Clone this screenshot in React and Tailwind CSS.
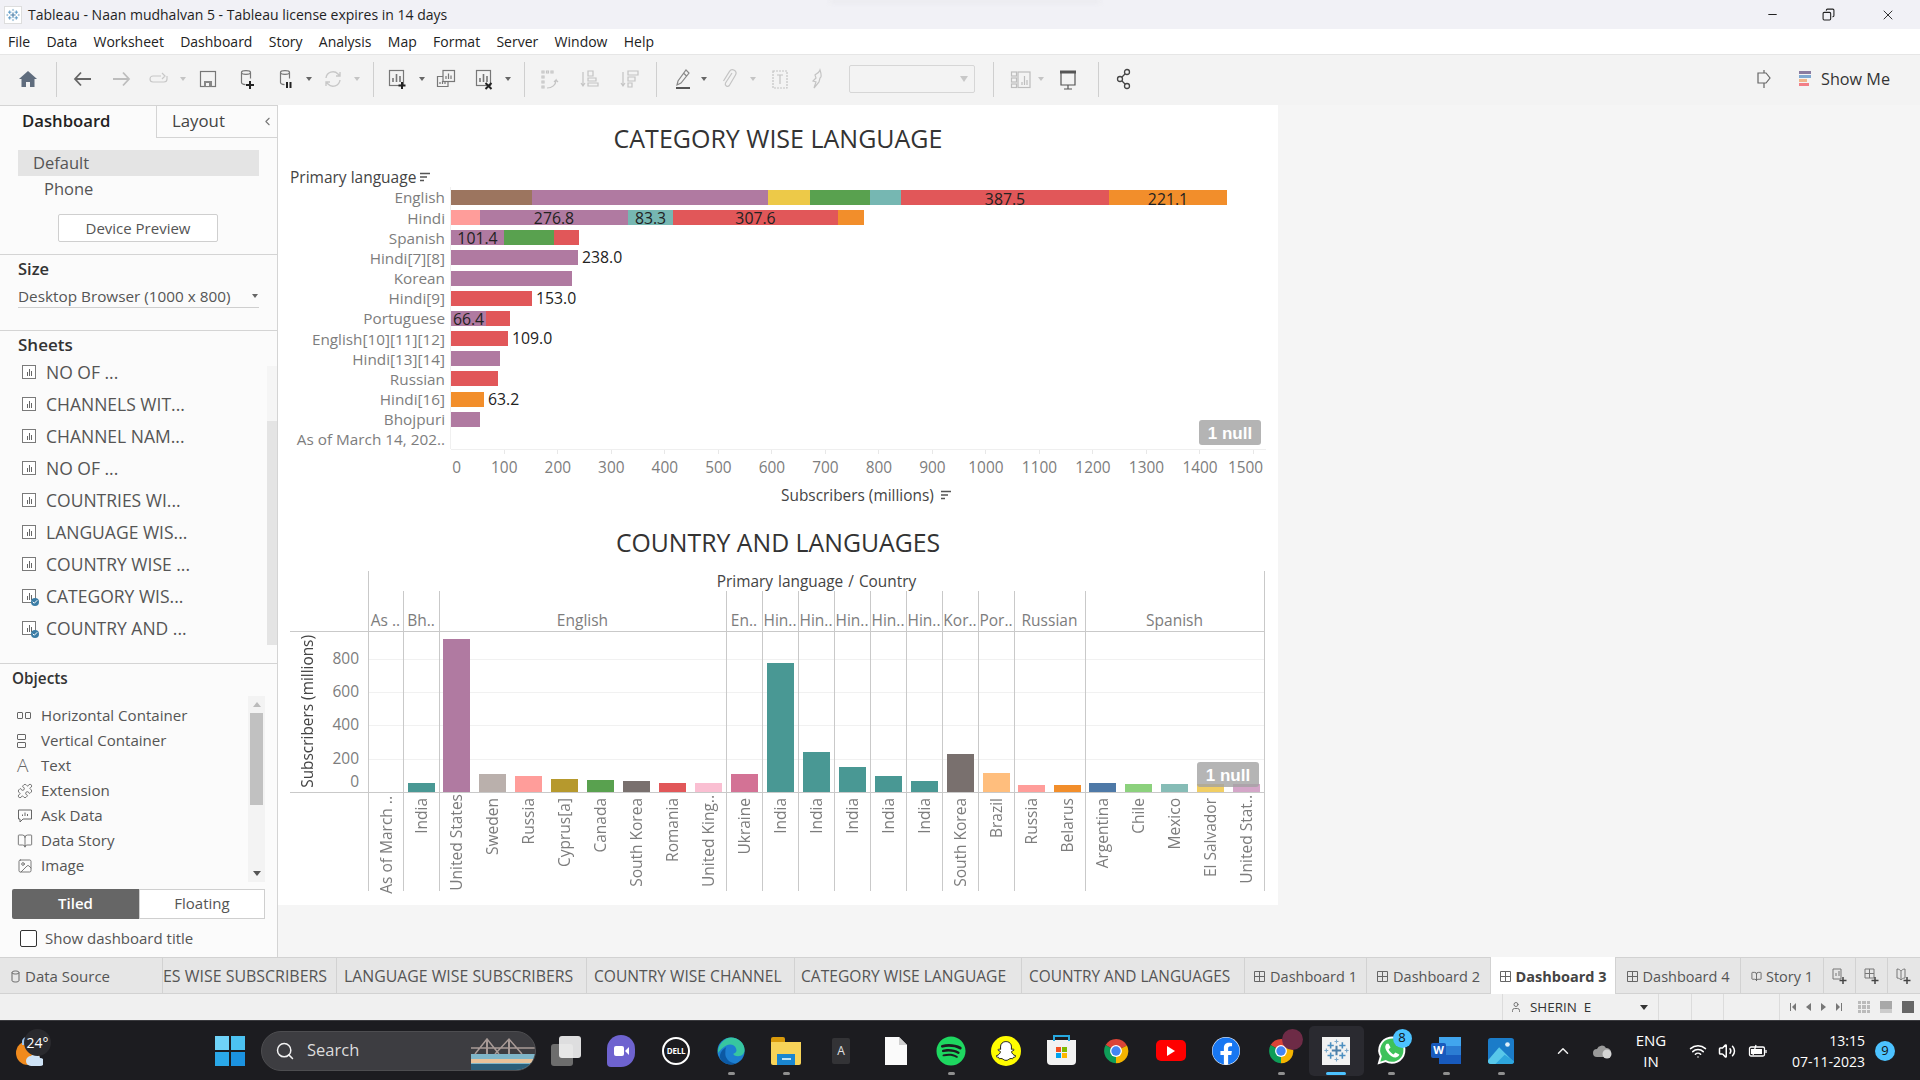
import { Minus, X, Copy, ChevronUp, ChevronLeft, Wifi, Volume2, Puzzle, Search, BookOpen, Image as ImageIcon, User, Check } from 'lucide-react';
import { FaFacebook, FaSpotify, FaSnapchatGhost } from 'react-icons/fa';

const menus = ['File', 'Data', 'Worksheet', 'Dashboard', 'Story', 'Analysis', 'Map', 'Format', 'Server', 'Window', 'Help'];

const sheets = [
  ['NO OF ...'], ['CHANNELS WIT...'], ['CHANNEL NAM...'], ['NO OF ...'], ['COUNTRIES WI...'],
  ['LANGUAGE WIS...'], ['COUNTRY WISE ...'], ['CATEGORY WIS...', true], ['COUNTRY AND ...', true],
];

const purple = 'bg-[#b07aa1]';
const red = 'bg-[#e15759]';
const orange = 'bg-[#f28e2b]';
const green = 'bg-[#59a14f]';

// x widths in pixels, measured from the bar start
const langRows = [
  { name: 'English', drop: true, segs: [[81, 'bg-[#9c755f]'], [236, purple], [42, 'bg-[#edc948]'], [60, green], [31, 'bg-[#76b7b2]'], [208, red, '387.5'], [118, orange, '221.1']] },
  { name: 'Hindi', segs: [[29, 'bg-[#ff9d9a]'], [148, purple, '276.8'], [45, 'bg-[#76b7b2]', '83.3'], [165, red, '307.6'], [26, orange]] },
  { name: 'Spanish', segs: [[53, purple, '101.4'], [50, green], [25, red]] },
  { name: 'Hindi[7][8]', segs: [[127, purple]], after: '238.0' },
  { name: 'Korean', segs: [[121, purple]] },
  { name: 'Hindi[9]', segs: [[81, red]], after: '153.0' },
  { name: 'Portuguese', segs: [[35, purple, '66.4'], [24, red]] },
  { name: 'English[10][11][12]', segs: [[57, red]], after: '109.0' },
  { name: 'Hindi[13][14]', segs: [[49, purple]] },
  { name: 'Russian', segs: [[47, red]] },
  { name: 'Hindi[16]', segs: [[33, orange]], after: '63.2' },
  { name: 'Bhojpuri', segs: [[29, purple]] },
  { name: 'As of March 14, 202..', segs: [] },
];

const axisTicks = ['0', '100', '200', '300', '400', '500', '600', '700', '800', '900', '1000', '1100', '1200', '1300', '1400', '1500'];

const teal = 'bg-[#499894]';
const countryGroups = [
  { name: 'As ..', w: 35, items: [{ c: 'As of March ..', h: 0, pt: 'pt-[3px]' }] },
  { name: 'Bh..', w: 36, items: [{ c: 'India', h: 9, col: teal }] },
  {
    name: 'English', w: 287, nudge: '-ml-px', items: [
      { c: 'United States', h: 153, col: purple, pt: 'pt-[1px]' },
      { c: 'Sweden', h: 18, col: 'bg-[#bab0ac]' },
      { c: 'Russia', h: 16, col: 'bg-[#ff9d9a]' },
      { c: 'Cyprus[a]', h: 13, col: 'bg-[#b6992d]' },
      { c: 'Canada', h: 12, col: green },
      { c: 'South Korea', h: 11, col: 'bg-[#79706e]' },
      { c: 'Romania', h: 9, col: red },
      { c: 'United King..', h: 9, col: 'bg-[#fabfd2]', pt: 'pt-[2px]' },
    ],
  },
  { name: 'En..', w: 36, items: [{ c: 'Ukraine', h: 18, col: 'bg-[#d37295]' }] },
  { name: 'Hin..', w: 36, items: [{ c: 'India', h: 129, col: teal }] },
  { name: 'Hin..', w: 36, items: [{ c: 'India', h: 40, col: teal }] },
  { name: 'Hin..', w: 36, items: [{ c: 'India', h: 25, col: teal }] },
  { name: 'Hin..', w: 36, items: [{ c: 'India', h: 16, col: teal }] },
  { name: 'Hin..', w: 36, items: [{ c: 'India', h: 11, col: teal }] },
  { name: 'Kor..', w: 36, items: [{ c: 'South Korea', h: 38, col: 'bg-[#79706e]' }] },
  { name: 'Por..', w: 36, items: [{ c: 'Brazil', h: 19, col: 'bg-[#ffbe7d]' }] },
  {
    name: 'Russian', w: 71, nudge: '-ml-px', items: [
      { c: 'Russia', h: 7, col: 'bg-[#ff9d9a]' },
      { c: 'Belarus', h: 7, col: orange },
    ],
  },
  {
    name: 'Spanish', w: 179, nudge: '-ml-px', items: [
      { c: 'Argentina', h: 9, col: 'bg-[#4e79a7]' },
      { c: 'Chile', h: 8, col: 'bg-[#8cd17d]' },
      { c: 'Mexico', h: 8, col: 'bg-[#86bcb6]' },
      { c: 'El Salvador', h: 8, col: 'bg-[#f1ce63]' },
      { c: 'United Stat..', h: 8, col: 'bg-[#d4a6c8]', pt: 'pt-[2px]' },
    ],
  },
];

const gridLines = ['top-[27px]', 'top-[60px]', 'top-[93px]', 'top-[127px]'];
const yLabels = [['800', 'top-[16px]'], ['600', 'top-[49px]'], ['400', 'top-[82px]'], ['200', 'top-[116px]'], ['0', 'top-[139px]']];

const tabs = [
  { t: 'ES WISE SUBSCRIBERS', w: 174, cls: 'justify-start text-[15.950px]' },
  { t: 'LANGUAGE WISE SUBSCRIBERS', w: 250, cls: 'justify-start pl-[7px] text-[15.850px]' },
  { t: 'COUNTRY WISE CHANNEL', w: 208, cls: 'justify-start pl-[7px] text-[15.600px]' },
  { t: 'CATEGORY WISE LANGUAGE', w: 227, cls: 'justify-start pl-[6px] text-[15.600px]' },
  { t: 'COUNTRY AND LANGUAGES', w: 223, cls: 'justify-start pl-[7px] text-[15.400px]' },
  { t: 'Dashboard 1', w: 122, dash: true, cls: 'justify-center' },
  { t: 'Dashboard 2', w: 124, dash: true, cls: 'justify-center' },
  { t: 'Dashboard 3', w: 125, dash: true, cls: 'justify-center bg-white font-bold text-[#444] -my-px border-y-white' },
  { t: 'Dashboard 4', w: 125, dash: true, cls: 'justify-center' },
];

function TableauLogo({ size = 16 }) {
  const cross = (x, y, r, col, sw) => (
    <g stroke={col} strokeWidth={sw}>
      <path d={`M${x - r} ${y}H${x + r}M${x} ${y - r}V${y + r}`} />
    </g>
  );
  return (
    <svg viewBox="0 0 32 32" width={size} height={size}>
      {cross(16, 16, 6, '#4c7fa8', 2.6)}
      {cross(8.5, 9.5, 4, '#4c8fc0', 2)}
      {cross(23.5, 9.5, 4, '#4c8fc0', 2)}
      {cross(8.5, 22.5, 4, '#4c8fc0', 2)}
      {cross(23.5, 22.5, 4, '#4c8fc0', 2)}
      {cross(16, 4.5, 2.5, '#7aa7c9', 1.4)}
      {cross(16, 27.5, 2.5, '#7aa7c9', 1.4)}
      {cross(3, 16, 2.5, '#7aa7c9', 1.4)}
      {cross(29, 16, 2.5, '#7aa7c9', 1.4)}
    </svg>
  );
}

function Tool({ ml, children }) {
  return <div className={`w-6 h-6 flex-none flex items-center justify-center ${ml}`}>{children}</div>;
}

function Caret({ ml, light }) {
  return (
    <div className={`w-2 flex-none flex justify-center ${ml}`}>
      <div className={`w-0 h-0 border-x-[3px] border-x-transparent border-t-[4px] ${light ? 'border-t-[#c4c4c4]' : 'border-t-[#666]'}`} />
    </div>
  );
}

function Sep({ ml }) {
  return <div className={`w-px h-[35px] flex-none bg-[#cfcfcf] ${ml}`} />;
}

function Ico({ children, color = '#777', sw = 1.2 }) {
  return (
    <svg viewBox="0 0 24 24" width="24" height="24" fill="none" stroke={color} strokeWidth={sw}>
      {children}
    </svg>
  );
}

function ChartGlyph({ color = '#777' }) {
  return (
    <>
      <rect x="4.5" y="3.5" width="14" height="15" stroke={color} />
      <path d="M8 15v-4M11.5 15V7M15 15v-6" stroke={color} strokeWidth="1.6" />
    </>
  );
}

function Cylinder() {
  return <path d="M6.5 5.5c0-2.4 9-2.4 9 0v6M6.5 5.5c0 2.4 9 2.4 9 0M6.5 5.5v10c0 1.4 2 2 4 2.2" />;
}

function SheetIcon({ check }) {
  return (
    <div className="relative w-[14px] h-[14px] flex-none border border-[#7a7a7a] bg-white flex items-end justify-center gap-px pb-[2px]">
      <div className="w-px h-[4px] bg-[#666]" />
      <div className="w-px h-[7px] bg-[#666]" />
      <div className="w-px h-[5px] bg-[#666]" />
      {check && (
        <div className="absolute -right-[4px] -bottom-[4px] w-[8px] h-[8px] rounded-full bg-[#3a7ca5] flex items-center justify-center">
          <Check size={6} color="white" strokeWidth={4} />
        </div>
      )}
    </div>
  );
}

function SortIcon() {
  return (
    <svg width="11" height="11" viewBox="0 0 11 11" className="flex-none">
      <path d="M0 1.5h10M0 5h7M0 8.5h4" stroke="#555" strokeWidth="1.6" />
    </svg>
  );
}

function TitleBar() {
  return (
    <div className="relative h-[29px] flex-none bg-[#f1f1f6] flex items-center">
      <div className="absolute top-0 left-[830px] w-[270px] h-[3px] bg-[#e9e9ed] blur-[2px]" />
      <div className="w-[24px] flex justify-center ml-[1px] mr-[3px]">
        <div className="bg-white border border-[#ddd] p-px"><TableauLogo size={14} /></div>
      </div>
      <span className="text-[14px] text-[#1f1f1f]">Tableau - Naan mudhalvan 5 - Tableau license expires in 14 days</span>
      <div className="ml-auto flex items-center pr-1">
        <div className="w-14 flex justify-center"><Minus size={13} color="#222" /></div>
        <div className="w-14 flex justify-center"><Copy size={13} color="#222" className="-scale-x-100" /></div>
        <div className="w-14 ml-1 flex justify-center"><X size={16} color="#222" strokeWidth={1.4} /></div>
      </div>
    </div>
  );
}

function MenuBar() {
  return (
    <div className="h-[25px] flex-none bg-white flex items-center gap-[16.300px] pl-[8px] text-[14px] text-[#222]">
      {menus.map(m => <span key={m}>{m}</span>)}
    </div>
  );
}

function Toolbar() {
  return (
    <div className="h-[51px] flex-none bg-[#f3f3f3] border-t border-[#e6e6e6] pb-[2px] flex items-center">
      <Tool ml="ml-[16px]">
        <svg viewBox="0 0 18 16" width="18" height="16"><path d="M9 0 18 8h-2.500v8H11v-5H7v5H2.500V8H0z" fill="#5f6c7d" /></svg>
      </Tool>
      <Sep ml="ml-[16px]" />
      <Tool ml="ml-[14px]"><Ico color="#666" sw={1.8}><path d="M20 12H4M10 5.500 4 12l6 6.500" /></Ico></Tool>
      <Tool ml="ml-[14px]"><Ico color="#bdbdbd" sw={1.8}><path d="M4 12h16M14 5.500l6 6.500-6 6.500" /></Ico></Tool>
      <Tool ml="ml-[14px]"><Ico color="#c8c8c8"><path d="M14 9H6a3 3 0 0 0 0 6h11a3 3 0 0 0 3-3V9M15 6l3 3-3 3" /></Ico></Tool>
      <Caret ml="ml-[8px]" light />
      <Tool ml="ml-[9px]"><Ico><rect x="4.500" y="4.500" width="15" height="15" /><rect x="8" y="14" width="8" height="5.500" fill="#888" stroke="none" /><rect x="10" y="16" width="3" height="3" fill="#f3f3f3" stroke="none" /></Ico></Tool>
      <Tool ml="ml-[15px]"><Ico><Cylinder /><path d="M15 14v8M11 18h8" stroke="#222" strokeWidth="2" /></Ico></Tool>
      <Tool ml="ml-[15px]"><Ico><Cylinder /><path d="M13 15v6M16.500 15v6" stroke="#222" strokeWidth="2" /></Ico></Tool>
      <Caret ml="ml-[7px]" />
      <Tool ml="ml-[8px]"><Ico color="#c8c8c8" sw={1.4}><path d="M5 11a7 7 0 0 1 12-4l2 2M19 13a7 7 0 0 1-12 4l-2-2M19 5v4h-4M5 19v-4h4" /></Ico></Tool>
      <Caret ml="ml-[8px]" light />
      <Sep ml="ml-[12px]" />
      <Tool ml="ml-[11px]"><Ico><ChartGlyph /><path d="M17 15v7M13.500 18.500h7" stroke="#222" strokeWidth="2" /></Ico></Tool>
      <Caret ml="ml-[9px]" />
      <Tool ml="ml-[8px]"><Ico><rect x="9" y="3.500" width="11.500" height="11" /><path d="M12 12V9M14.500 12V6.500M17 12V8.500" /><path d="M9 9.500H3.500v10H14v-5" /><path d="M6 17v-2M8.500 17v-3M11 17v-2" /></Ico></Tool>
      <Tool ml="ml-[14px]"><Ico><ChartGlyph /><path d="m13.500 16 6 6M19.500 16l-6 6" stroke="#222" strokeWidth="2" /></Ico></Tool>
      <Caret ml="ml-[8px]" />
      <Sep ml="ml-[12px]" />
      <Tool ml="ml-[12px]"><Ico color="#c4c4c4"><path d="M5 4h2v2H5zM9.500 4h2v2h-2zM14 4h2v2h-2zM5 9h2v2H5zM5 14h2v2H5zM5 19h2v2H5zM10 21c5 0 9-3 9-8l-2 2M19 13l2 2" /></Ico></Tool>
      <Tool ml="ml-[16px]"><Ico color="#c4c4c4"><path d="M6 5v14M4 16l2 3 2-3M11 4h5v5h-5zM11 11h8v3h-8zM11 16h10v3H11z" /></Ico></Tool>
      <Tool ml="ml-[16px]"><Ico color="#c4c4c4"><path d="M6 5v14M4 16l2 3 2-3M11 4h10v4H11zM11 10h7v4h-7zM11 16h4v4h-4z" /></Ico></Tool>
      <Sep ml="ml-[15px]" />
      <Tool ml="ml-[14px]"><Ico color="#888"><path d="m15 3 3 3-8 10-4 2 1-4zM12.500 6l3 3" /><path d="M5 21h14" stroke="#555" strokeWidth="2" /></Ico></Tool>
      <Caret ml="ml-[5px]" />
      <Tool ml="ml-[9px]"><Ico color="#c4c4c4"><path d="M15 6 8.500 16a2.300 2.300 0 0 0 3.800 2.500L18.500 8a3.500 3.500 0 0 0-6-3.600L6.500 14" /></Ico></Tool>
      <Caret ml="ml-[8px]" light />
      <Tool ml="ml-[11px]"><Ico color="#c4c4c4"><rect x="5" y="4" width="14" height="17" strokeDasharray="2 1" /><path d="M9 8h6M12 8v9" /></Ico></Tool>
      <Tool ml="ml-[13px]"><Ico color="#c4c4c4"><path d="M15 3c-1 3-4 4-5 5l1 3-3 3 3 1-2 6 5-6 1-4c2-1 1-5 0-8z" /></Ico></Tool>
      <div className="ml-[20px] w-[126px] h-[28px] flex-none border border-[#d6d6d6] rounded-[2px] flex items-center justify-end pr-[6px]">
        <div className="w-0 h-0 border-x-[4px] border-x-transparent border-t-[6px] border-t-[#c8c8c8]" />
      </div>
      <Sep ml="ml-[18px]" />
      <Tool ml="ml-[15px]"><Ico color="#bdbdbd"><rect x="2.500" y="5" width="5" height="4" /><rect x="2.500" y="11" width="5" height="4" /><rect x="2.500" y="17" width="5" height="3.500" /><rect x="9" y="5" width="12" height="15.500" /><path d="M13 18v-3M15.500 18V9M18 18v-5" /></Ico></Tool>
      <Caret ml="ml-[4px]" light />
      <Tool ml="ml-[11px]"><Ico color="#555"><path d="M5 5h14v13H5zM12 18v4M8 22h8" /><path d="M4 5h16" strokeWidth="3" /></Ico></Tool>
      <Sep ml="ml-[18px]" />
      <Tool ml="ml-[13px]"><Ico color="#444" sw={1.3}><circle cx="15" cy="5" r="2.500" /><circle cx="8" cy="12" r="2.500" /><circle cx="15" cy="19" r="2.500" /><path d="m13 7-3 3M10 14l3 3" /></Ico></Tool>
      <div className="ml-auto flex items-center pr-[30px]">
        <Tool ml="ml-0"><Ico color="#666"><path d="M12 3v3M12 16v5M6 6h8l4 5-4 5H6z" /></Ico></Tool>
        <div className="ml-[23px] w-[12px] flex flex-col gap-px">
          <div className="h-[3px] bg-[#8a7ba0]" />
          <div className="h-[3px] bg-[#7fa8d0]" />
          <div className="h-[3px] w-[8px] bg-[#f0b58a]" />
          <div className="h-[3px] w-[10px] bg-[#f27e86]" />
        </div>
        <span className="ml-[10px] text-[16.200px] text-[#333]">Show Me</span>
      </div>
    </div>
  );
}

function SectionTitle({ children, className = '' }) {
  return <div className={`font-semibold text-[#333] leading-5 ${className}`}>{children}</div>;
}

const objects = [
  ['Horizontal Container', <div key="h" className="flex gap-[2px]"><div className="w-[6px] h-[7px] border border-[#666] rounded-[1px]" /><div className="w-[6px] h-[7px] border border-[#666] rounded-[1px]" /></div>],
  ['Vertical Container', <div key="v" className="flex flex-col gap-[2px]"><div className="w-[9px] h-[6px] border border-[#666] rounded-[1px]" /><div className="w-[9px] h-[6px] border border-[#666] rounded-[1px]" /></div>],
  ['Text', <span key="t" className="text-[19px] leading-none text-[#666] font-light">A</span>],
  ['Extension', <Puzzle key="e" size={16} color="#666" strokeWidth={1.3} />],
  ['Ask Data', <svg key="a" width="16" height="16" viewBox="0 0 16 16" fill="none" stroke="#666"><path d="M1.500 2h13v9H6l-3 3v-3H1.500z" /><path d="M5.500 8V6.500M8 8V4.500M10.500 8V6" /></svg>],
  ['Data Story', <BookOpen key="d" size={16} color="#666" strokeWidth={1.3} />],
  ['Image', <ImageIcon key="i" size={16} color="#666" strokeWidth={1.3} />],
];

function Sidebar() {
  return (
    <div className="w-[278px] flex-none bg-[#fbfbfb] border-r border-[#d4d4d4] border-t flex flex-col">
      <div className="h-[32px] flex-none flex">
        <div className="w-[156px] pl-[22px] pt-[2px] text-[16.700px] font-semibold text-[#222]">Dashboard</div>
        <div className="flex-1 border-l border-b border-[#d4d4d4] flex items-center pl-[15px] pr-[3px] pb-[1px] text-[16.800px] text-[#444]">
          Layout
          <ChevronLeft size={13} color="#777" className="ml-auto" />
        </div>
      </div>
      <div className="h-[117px] flex-none border-b border-[#d4d4d4] pt-[12px]">
        <div className="mx-[18px] h-[26px] bg-[#e4e4e4] pl-[15px] flex items-center text-[16.500px] text-[#555]">Default</div>
        <div className="h-[26px] pl-[44px] flex items-center text-[16.500px] text-[#555]">Phone</div>
        <div className="mt-[12px] ml-[58px] w-[160px] h-[28px] bg-white border border-[#cfcfcf] rounded-[2px] flex items-center justify-center text-[15px] text-[#555]">Device Preview</div>
      </div>
      <div className="h-[76px] flex-none border-b border-[#d4d4d4] px-[18px] pt-[4px]">
        <SectionTitle className="text-[16.500px]">Size</SectionTitle>
        <div className="mt-[6px] h-[23px] border-b border-[#cfcfcf] flex items-center justify-between text-[15.300px] text-[#555] whitespace-nowrap">
          Desktop Browser (1000 x 800)
          <div className="w-0 h-0 border-x-[3px] border-x-transparent border-t-[4px] border-t-[#666] mr-[1px]" />
        </div>
      </div>
      <div className="h-[333px] flex-none border-b border-[#d4d4d4] flex flex-col">
        <SectionTitle className="pl-[18px] pt-[4px] mb-[1px] text-[17px]">Sheets</SectionTitle>
        <div className="flex">
          <div className="flex-1">
            {sheets.map(([name, check], i) => (
              <div key={i} className="h-[32px] pl-[22px] flex items-center gap-[10px] text-[17.500px] text-[#555] whitespace-nowrap">
                <SheetIcon check={check} />
                {name}
              </div>
            ))}
          </div>
          <div className="w-[10px] mt-[10px] h-[279px] bg-[#f5f5f5] flex flex-col">
            <div className="h-[55px]" />
            <div className="flex-1 bg-[#e4e4e4]" />
          </div>
        </div>
      </div>
      <div className="flex-1 flex flex-col">
        <SectionTitle className="pl-[12px] pt-[4px] text-[15.300px] font-medium">Objects</SectionTitle>
        <div className="mt-[8px] h-[186px] flex">
          <div className="w-[248px] pt-[7px]">
            {objects.map(([name, icon]) => (
              <div key={name} className="h-[25px] flex items-center text-[15.100px] text-[#555] whitespace-nowrap">
                <div className="w-[41px] pl-[17px] flex-none flex justify-start">{icon}</div>
                {name}
              </div>
            ))}
          </div>
          <div className="w-[17px] bg-[#f3f3f3] flex flex-col items-center">
            <div className="h-[17px] flex items-center"><div className="w-0 h-0 border-x-[4px] border-x-transparent border-b-[5px] border-b-[#bbb]" /></div>
            <div className="w-[13px] h-[92px] bg-[#c1c1c1]" />
            <div className="mt-auto h-[17px] flex items-center"><div className="w-0 h-0 border-x-[4px] border-x-transparent border-t-[5px] border-t-[#555]" /></div>
          </div>
        </div>
        <div className="mt-[7px] ml-[12px] w-[253px] h-[30px] flex text-[15px]">
          <div className="w-[127px] pb-[2px] bg-[#666] text-white font-semibold flex items-center justify-center rounded-l-[2px]">Tiled</div>
          <div className="flex-1 pb-[2px] bg-white border border-[#cfcfcf] text-[#555] flex items-center justify-center">Floating</div>
        </div>
        <div className="mt-[9px] ml-[20px] flex items-center gap-[8px] text-[15px] leading-5 text-[#555]">
          <div className="w-[17px] h-[17px] bg-white border border-[#333] rounded-[2px]" />
          Show dashboard title
        </div>
      </div>
    </div>
  );
}

function LanguageChart() {
  return (
    <div>
      <div className="h-[62px] pt-[6px] flex items-center justify-center text-[25px] font-medium text-[#333]">CATEGORY WISE LANGUAGE</div>
      <div className="h-[20.400px] pl-[12px] flex items-center gap-[4px] text-[15.500px] font-medium text-[#444]">
        Primary language <SortIcon />
      </div>
      <div className="relative">
        {langRows.map(r => (
          <div key={r.name} className="h-[20.170px] flex items-center">
            <div className="w-[167px] flex-none text-right text-[15.300px] leading-5 text-[#7d7d7d] whitespace-nowrap">{r.name}</div>
            <div className="ml-[6px] h-full flex items-center border-l border-[#f0f0f0] -translate-x-px">
              {r.segs.map(([w, col, label], i) => (
                <div key={i} style={{ width: w }} className={`h-[15px] flex-none flex justify-center text-[15.800px] text-[#222] whitespace-nowrap ${col} ${r.drop ? 'overflow-hidden items-start leading-[17px] pt-[1px]' : 'items-center leading-[14px] pt-[1px]'}`}>
                  {label}
                </div>
              ))}
              {r.after && <span className="ml-[4px] text-[15.800px] leading-[15px] text-[#222]">{r.after}</span>}
            </div>
          </div>
        ))}
        <div className="absolute left-[921px] top-[233px] w-[62px] h-[25px] pt-px rounded-[3px] bg-[#b4b4b4] text-white text-[17px] font-bold flex items-center justify-center [font-family:'Liberation_Sans',sans-serif]">1 null</div>
      </div>
      <div className="ml-[173px] w-[815px] h-[9px] border-t border-[#efefef] flex">
        {axisTicks.slice(1).map(t => <div key={t} className="w-[53.530px] h-[4px] flex-none border-r border-[#e8e8e8]" />)}
      </div>
      <div className="ml-[146px] h-[20px] flex text-[15.400px] leading-5 text-[#7d7d7d]">
        {axisTicks.map(t => (
          <div key={t} className={`w-[53.530px] flex-none text-center ${t === '0' ? 'pl-[12px]' : ''} ${t === '1500' ? 'pr-[16px]' : ''}`}>{t}</div>
        ))}
      </div>
      <div className="mt-[7px] ml-[503px] h-[20px] flex items-center gap-[7px] text-[15.400px] font-medium text-[#444]">
        Subscribers (millions) <SortIcon />
      </div>
    </div>
  );
}

function CountryChart() {
  return (
    <div>
      <div className="mt-[10px] h-[54px] flex items-center justify-center text-[24.800px] font-medium text-[#333]">COUNTRY AND LANGUAGES</div>
      <div className="relative ml-[12px] mt-[2px] flex">
        <div className="w-[78px] flex-none pt-[60px]">
          <div className="h-[162px] border-y border-[#c9c9c9] flex">
            <div className="w-[36px] pr-[1px] pb-[2px] flex items-center justify-center">
              <span className="[writing-mode:vertical-rl] rotate-180 text-[15.400px] font-medium text-[#444] whitespace-nowrap">Subscribers (millions)</span>
            </div>
            <div className="relative flex-1">
              {yLabels.map(([t, top]) => (
                <span key={t} className={`absolute right-[9px] text-[15.500px] leading-5 text-[#7d7d7d] ${top}`}>{t}</span>
              ))}
            </div>
          </div>
        </div>
        <div className="w-[897px] flex-none shadow-[inset_-1px_0_0_#c9c9c9,inset_1px_0_0_#c9c9c9]">
          <div className="h-[20px] flex items-center justify-center text-[15.400px] font-medium text-[#444] [word-spacing:1px]">Primary language / Country</div>
          <div className="flex">
            {countryGroups.map((g, gi) => (
              <div key={gi} style={{ width: g.w }} className="flex-none shadow-[inset_1px_0_0_#c9c9c9]">
                <div className="h-[40px] flex items-end justify-center pb-[1px] text-[15.500px] leading-5 text-[#7d7d7d] whitespace-nowrap">{g.name}</div>
                <div className="relative h-[162px] border-y border-[#c9c9c9] flex items-end">
                  {gridLines.map(top => <div key={top} className={`absolute left-px right-0 h-px bg-[#f1f1f1] ${top}`} />)}
                  {g.items.map((it, i) => (
                    <div key={i} className={`relative w-[36px] flex-none flex justify-center ${i === 0 && g.nudge ? g.nudge : ''}`}>
                      {it.h > 0 && <div style={{ height: it.h }} className={`w-[27px] ${it.col}`} />}
                    </div>
                  ))}
                </div>
                <div className="h-[98px] flex">
                  {g.items.map((it, i) => (
                    <div key={i} className={`w-[36px] pr-[1px] flex-none flex justify-center items-start ${it.pt || 'pt-[5px]'} ${i === 0 && g.nudge ? g.nudge : ''}`}>
                      <span className="[writing-mode:vertical-rl] rotate-180 text-[15.500px] leading-5 text-[#7d7d7d] whitespace-nowrap">{it.c}</span>
                    </div>
                  ))}
                </div>
              </div>
            ))}
          </div>
        </div>
        <div className="absolute left-[907px] top-[191px] w-[62px] h-[25px] pt-px rounded-[3px] bg-[#a3a3a3]/80 text-white text-[17px] font-bold flex items-center justify-center [font-family:'Liberation_Sans',sans-serif]">1 null</div>
      </div>
    </div>
  );
}

function Main() {
  return (
    <div className="h-[852px] flex-none flex">
      <Sidebar />
      <div className="flex-1 bg-[#f5f5f5]">
        <div className="w-[1000px] h-[800px] bg-white">
          <LanguageChart />
          <CountryChart />
        </div>
      </div>
    </div>
  );
}

function Tabs() {
  return (
    <div className="h-[37px] flex-none bg-[#e6e6e6] border-y border-[#d2d2d2] flex text-[14.500px] text-[#555]">
      <div className="w-[163px] flex-none border-r border-[#d2d2d2] flex items-center pl-[11px] pt-[1px] gap-[5px] text-[15px]">
        <svg width="9" height="13" viewBox="0 0 9 13" fill="none" stroke="#666"><path d="M1 2.500c0-2 7-2 7 0v8c0 2-7 2-7 0zM1 2.500c0 2 7 2 7 0" /></svg>
        Data Source
      </div>
      {tabs.map(t => (
        <div key={t.t} style={{ width: t.w }} className={`flex-none border-r border-[#d2d2d2] flex items-center gap-[5px] pt-[2px] whitespace-nowrap overflow-hidden ${t.cls}`}>
          {t.dash && (
            <svg width="11" height="11" viewBox="0 0 11 11" fill="none" stroke="#666"><path d="M.500.500h10v10H.500zM5.500.500v10M.500 5.500h10" /></svg>
          )}
          {t.t}
        </div>
      ))}
      <div className="w-[83px] flex-none border-r border-[#d2d2d2] flex items-center justify-center pt-[2px] gap-[4px]">
        <BookOpen size={11} color="#666" />
        Story 1
      </div>
      <AddTab>
        <path d="M2 2h8v10H2zM5 9V6M8 9V4" />
      </AddTab>
      <AddTab>
        <path d="M2 2h9v9H2zM6.500 2v9M2 6.500h9" />
      </AddTab>
      <AddTab last>
        <path d="M2 2c2 0 3 1 4 2 1-1 2-2 4-2v9c-2 0-3 1-4 2-1-1-2-2-4-2zM6 4v9" />
      </AddTab>
    </div>
  );
}

function AddTab({ children, last }) {
  return (
    <div className={`w-[32px] flex-none flex items-center justify-center ${last ? '' : 'border-r border-[#d2d2d2]'}`}>
      <svg width="18" height="18" viewBox="0 0 18 18" fill="none" stroke="#777">
        {children}
        <path d="M12 10v7M8.500 13.500h7" stroke="#444" strokeWidth="1.500" />
      </svg>
    </div>
  );
}

function StatusBar() {
  return (
    <div className="h-[26px] flex-none bg-[#f0f0f0] flex items-center justify-end text-[13.400px] text-[#333]">
      <div className="w-[156px] h-full flex-none border-l border-[#dcdcdc] flex items-center pl-[7px] gap-[8px]">
        <User size={12} color="#777" />
        <span>SHERIN&nbsp; E</span>
        <div className="ml-auto mr-[10px] w-0 h-0 border-x-[4px] border-x-transparent border-t-[5px] border-t-[#333]" />
      </div>
      <div className="w-[33px] h-full flex-none border-l border-[#dcdcdc]" />
      <div className="w-[32px] h-full flex-none border-l border-[#dcdcdc]" />
      <div className="w-[56px] h-full flex-none border-l border-[#dcdcdc]" />
      <div className="w-[141px] h-full flex-none border-l border-[#dcdcdc] flex items-center gap-[10px] pl-[10px]">
        <svg width="6" height="8" viewBox="0 0 6 8" fill="#777"><path d="M0 0h1v8H0zM6 0v8L2 4z" /></svg>
        <svg width="5" height="8" viewBox="0 0 5 8" fill="#777"><path d="M5 0v8L0 4z" /></svg>
        <svg width="5" height="8" viewBox="0 0 5 8" fill="#777"><path d="M0 0v8l5-4z" /></svg>
        <svg width="6" height="8" viewBox="0 0 6 8" fill="#777"><path d="M5 0h1v8H5zM0 0v8l4-4z" /></svg>
        <div className="ml-[6px] flex items-center gap-[10px]">
          <div className="w-[12px] h-[12px] grid grid-cols-3 gap-px">
            {[0, 1, 2, 3, 4, 5, 6, 7, 8].map(i => <div key={i} className="bg-[#bbb]" />)}
          </div>
          <div className="w-[12px] h-[12px] bg-[#a8a8a8] border-b-[4px] border-[#ccc]" />
          <div className="w-[12px] h-[12px] bg-[#666]" />
        </div>
      </div>
    </div>
  );
}

function TaskSlot({ children, dot, active }) {
  return (
    <div className={`relative w-[55px] h-[50px] flex-none flex items-center justify-center rounded-[5px] ${active ? 'bg-[#2a2a30]' : ''}`}>
      {children}
      {dot && <div className="absolute bottom-[1px] w-[7px] h-[3px] rounded-full bg-[#8f8f8f]" />}
      {active && <div className="absolute bottom-[1px] w-[20px] h-[3px] rounded-full bg-[#4cc2ff]" />}
    </div>
  );
}

function ChromeIcon() {
  return (
    <svg viewBox="0 0 48 48" width="30" height="30">
      <path d="M24 24 7.400 14.500A19.500 19.500 0 0 1 41.500 15z" fill="#db4437" />
      <path d="M24 24 41.500 15A19.500 19.500 0 0 1 24 43.500z" fill="#f4b400" />
      <path d="M24 24V43.500A19.500 19.500 0 0 1 7.400 14.500z" fill="#0f9d58" />
      <circle cx="24" cy="24" r="9.500" fill="#fff" />
      <circle cx="24" cy="24" r="7.500" fill="#4285f4" />
    </svg>
  );
}

function Taskbar() {
  return (
    <div className="relative h-[60px] flex-none bg-[#1c1c20] border-t border-[#3a3a3e] flex items-center text-white">
      {/* weather */}
      <div className="relative w-[215px] h-full flex-none">
        <svg viewBox="0 0 30 36" width="30" height="36" className="absolute left-[13px] top-[12px]">
          <circle cx="15" cy="20" r="12" fill="#f08a1d" />
          <path d="M9 8a5 5 0 0 1 8-3 4 4 0 0 1 3 7H9z" fill="#9cc4ec" />
          <path d="M18 33a5 5 0 0 1 0-10 5 5 0 0 1 9 2 4 4 0 0 1 0 8z" fill="#cfe3f6" />
        </svg>
        <div className="absolute left-[24px] top-[8px] w-[27px] h-[27px] rounded-full bg-[#2a2a2e] text-[14px] flex items-center justify-center">24°</div>
      </div>
      <div className="w-[30px] h-[30px] flex-none grid grid-cols-2 gap-[2px]">
        <div className="bg-[#6fd3f8]" />
        <div className="bg-[#4cc2f1]" />
        <div className="bg-[#2aa8e8]" />
        <div className="bg-[#1b92e0]" />
      </div>
      <div className="relative ml-[16px] w-[275px] h-[40px] flex-none rounded-full bg-[#3d3d41] border border-[#4d4d50] flex items-center pl-[13px] overflow-hidden">
        <Search size={20} color="#f2f2f2" strokeWidth={1.800} />
        <span className="ml-[12px] text-[16.500px] text-[#dcdcdc]">Search</span>
        <svg viewBox="0 0 64 38" width="64" height="38" className="absolute right-0 top-0">
          <rect y="22" width="64" height="16" fill="#7fb6c9" />
          <rect y="27" width="64" height="4" fill="#e8c29a" />
          <path d="M4 22 16 7l12 15M24 22 38 7l13 15M0 16h64" stroke="#a89a96" fill="none" strokeWidth="1.500" />
          <path d="M16 7v15M38 7v15" stroke="#a89a96" strokeWidth="2" />
          <rect y="32" width="64" height="6" fill="#2b5f7a" />
        </svg>
      </div>
      <div className="ml-[2.500px] flex items-center">
        <TaskSlot>
          <div className="relative w-[30px] h-[30px]">
            <div className="absolute left-0 bottom-0 w-[22px] h-[22px] rounded-[3px] bg-[#6d6d6d]" />
            <div className="absolute right-0 top-0 w-[22px] h-[22px] rounded-[3px] bg-[#f4f4f4]/90" />
          </div>
        </TaskSlot>
        <TaskSlot>
          <div className="w-[28px] h-[32px] rounded-[14px] rounded-bl-[4px] bg-[#6e63cf] flex items-center justify-center">
            <div className="w-[10px] h-[10px] rounded-[2px] bg-white" />
            <div className="w-0 h-0 border-y-[4px] border-y-transparent border-r-[4px] border-r-white ml-px" />
          </div>
        </TaskSlot>
        <TaskSlot>
          <div className="w-[28px] h-[28px] rounded-full border-2 border-white flex items-center justify-center text-[8px] font-bold tracking-tight">DELL</div>
        </TaskSlot>
        <TaskSlot dot>
          <svg viewBox="0 0 32 32" width="30" height="32">
            <circle cx="16" cy="16" r="14.500" fill="#1d7fd1" />
            <path d="M2 18C2 8 10 1.500 16 1.500c8 0 14.500 6 14.500 13.500 0 4-3 6.500-7 6.500-3 0-5-1-5-2.500 3-1 4-3 3-5.500C20 9 15 8 11 10 6 12.500 4 16 2 18z" fill="#37c6a0" />
            <path d="M10 17c-1 6 4 12 11 12-5 3-14 1-17-6 0-5 3-9 7-11-1 2-1 3-1 5z" fill="#0c59a4" />
          </svg>
        </TaskSlot>
        <TaskSlot dot>
          <div className="w-[30px] h-[28px] flex flex-col">
            <div className="w-[14px] h-[5px] rounded-t-[2px] bg-[#d99a0b]" />
            <div className="relative flex-1 bg-[#f7d358] rounded-b-[2px] flex justify-center items-end">
              <div className="w-[18px] h-[11px] bg-[#1a86d0] flex items-center justify-center"><div className="w-[9px] h-[2px] bg-[#bfe3f7]" /></div>
            </div>
          </div>
        </TaskSlot>
        <TaskSlot>
          <div className="w-[18px] h-[26px] rounded-[2px] bg-[#333336] text-[12px] text-[#e0e0e0] flex items-center justify-center">A</div>
        </TaskSlot>
        <TaskSlot>
          <svg viewBox="0 0 22 28" width="22" height="28"><path d="M0 0h14l8 8v20H0z" fill="#fafafa" /><path d="M14 0v8h8z" fill="#cfcfcf" /></svg>
        </TaskSlot>
        <TaskSlot dot>
          <FaSpotify size={30} color="#1ed760" />
        </TaskSlot>
        <TaskSlot>
          <div className="w-[30px] h-[30px] rounded-full bg-[#fffc00] flex items-center justify-center"><FaSnapchatGhost size={20} color="#fff" stroke="#111" strokeWidth={24} /></div>
        </TaskSlot>
        <TaskSlot>
          <div className="relative w-[29px] h-[25px] mt-[4px] rounded-b-[4px] bg-[#f2f2f2] grid grid-cols-2 gap-px px-[9px] py-[7px]">
            <div className="absolute -top-[5px] left-[6px] w-[17px] h-[6px] border-2 border-b-0 border-[#27a9e0]" />
            <div className="bg-[#f25022]" />
            <div className="bg-[#7fba00]" />
            <div className="bg-[#00a4ef]" />
            <div className="bg-[#ffb900]" />
          </div>
        </TaskSlot>
        <TaskSlot><ChromeIcon /></TaskSlot>
        <TaskSlot>
          <div className="w-[30px] h-[21px] rounded-[5px] bg-[#f00] flex items-center justify-center">
            <div className="w-0 h-0 border-y-[5px] border-y-transparent border-l-[8px] border-l-white" />
          </div>
        </TaskSlot>
        <TaskSlot>
          <div className="w-[28px] h-[28px] rounded-full bg-white flex items-center justify-center"><FaFacebook size={28} color="#1877f2" /></div>
        </TaskSlot>
        <TaskSlot dot>
          <ChromeIcon />
          <div className="absolute top-[3px] right-[6px] w-[21px] h-[21px] rounded-full bg-[#6d2b46]" />
        </TaskSlot>
        <TaskSlot active>
          <div className="w-[28px] h-[28px] bg-[#f2f2f2] flex items-center justify-center"><TableauLogo size={25} /></div>
        </TaskSlot>
        <TaskSlot dot>
          <svg viewBox="0 0 32 32" width="31" height="31">
            <path d="M3 29l2-7A13 13 0 1 1 10 27z" fill="#3ec25b" stroke="#fff" strokeWidth="2" />
            <path d="M11 9c-2 2-2 5 1 9s7 6 9 5 3-2 3-3l-4-2-2 2c-2-1-4-3-5-5l2-2-2-4z" fill="#fff" />
          </svg>
          <div className="absolute top-[3px] right-[7px] w-[19px] h-[19px] rounded-full bg-[#4cc2ff] text-[#111] text-[13px] flex items-center justify-center">8</div>
        </TaskSlot>
        <TaskSlot dot>
          <div className="relative w-[30px] h-[27px]">
            <div className="absolute right-0 top-0 w-[22px] h-full bg-[#2b7cd3] rounded-[2px] flex flex-col">
              <div className="flex-1 bg-[#41a5ee]" />
              <div className="flex-1 bg-[#2b7cd3]" />
              <div className="flex-1 bg-[#185abd]" />
            </div>
            <div className="absolute left-0 top-[6px] w-[15px] h-[15px] bg-[#185abd] rounded-[2px] text-[11px] font-bold flex items-center justify-center">W</div>
          </div>
        </TaskSlot>
        <TaskSlot dot>
          <svg viewBox="0 0 28 28" width="26" height="26">
            <rect width="28" height="28" rx="3" fill="#1b7cc9" />
            <circle cx="21" cy="7" r="2.500" fill="#dfeffa" />
            <path d="M0 24 12 10l14 14v1a3 3 0 0 1-3 3H3a3 3 0 0 1-3-3z" fill="#58c8ea" />
            <path d="M8 28 18 18l10 7v0a3 3 0 0 1-3 3z" fill="#2ea6dd" />
          </svg>
        </TaskSlot>
      </div>
      {/* tray */}
      <div className="ml-auto flex items-center pr-[25px]">
        <ChevronUp size={18} color="#eee" />
        <svg viewBox="0 0 20 16" width="20" height="16" className="ml-[20px]">
          <path d="M5 14a4 4 0 0 1 0-8 5 5 0 0 1 9-1 4.500 4.500 0 0 1 1 9z" fill="#9a9a9a" />
          <circle cx="15" cy="11" r="4.500" fill="#d5d5d5" />
        </svg>
        <div className="ml-[19px] w-[40px] text-center text-[15px] leading-[21px]">ENG<br />IN</div>
        <Wifi size={18} className="ml-[18px]" />
        <Volume2 size={18} className="ml-[11px]" />
        <svg viewBox="0 0 20 16" width="20" height="16" fill="none" stroke="#fff" strokeWidth="1.300" className="ml-[12px]">
          <rect x="1.500" y="4" width="15" height="9" rx="1.500" />
          <path d="M18 7v3M8 2 5 12" />
          <rect x="3" y="6" width="11" height="5" fill="#fff" stroke="none" />
        </svg>
        <div className="ml-[19px] w-[78px] text-right text-[14px] leading-[21px]">13:15<br />07-11-2023</div>
        <div className="ml-[10px] w-[20px] h-[20px] rounded-full bg-[#4cc2ff] text-[#111] text-[13px] flex items-center justify-center">9</div>
      </div>
    </div>
  );
}

export default function App() {
  return (
    <div className="w-[1920px] h-[1080px] flex flex-col overflow-hidden bg-white font-['Open_Sans',sans-serif]">
      <TitleBar />
      <MenuBar />
      <Toolbar />
      <Main />
      <Tabs />
      <StatusBar />
      <Taskbar />
    </div>
  );
}
